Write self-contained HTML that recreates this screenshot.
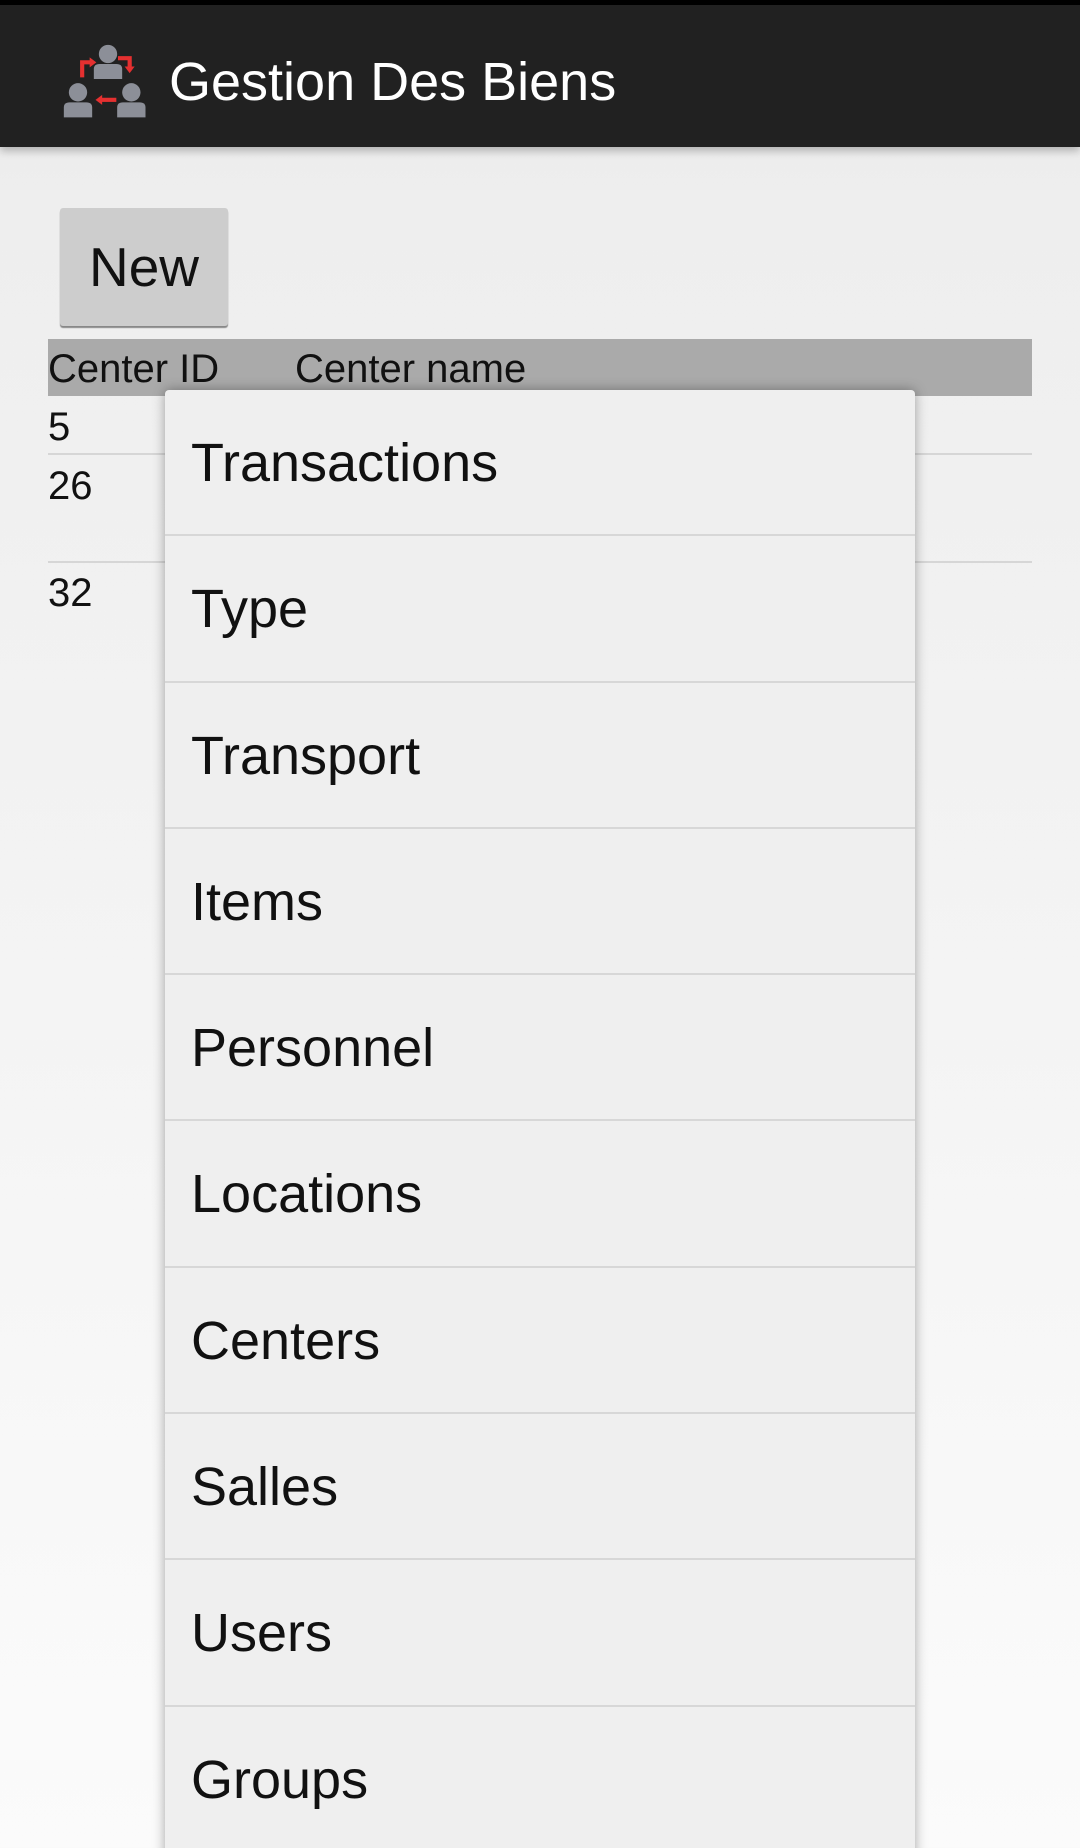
<!DOCTYPE html>
<html><head><meta charset="utf-8"><style>
*{margin:0;padding:0;box-sizing:border-box}
html,body{width:1080px;height:1848px;overflow:hidden}
body{font-family:"Liberation Sans",sans-serif;background:linear-gradient(#e9e9e9 0,#eeeeee 200px,#f4f4f4 1000px,#fbfbfb 1848px);position:relative}
.sb{position:absolute;left:0;top:0;width:1080px;height:5px;background:#000}
.ab{position:absolute;left:0;top:5px;width:1080px;height:142px;background:#212121;box-shadow:0 4px 8px rgba(0,0,0,.25)}
.title{position:absolute;left:169px;top:42px;color:#fff;font-size:54px;line-height:70px}
.icon{position:absolute;left:58px;top:28px}
.btn{position:absolute;left:60px;top:208px;width:168px;height:118px;background:#cdcdcd;border-radius:3px;box-shadow:0 2px 1px #888;font-size:55px;text-align:center;line-height:118px;color:#111}
.hdr{position:absolute;left:48px;top:339px;width:984px;height:57px;background:#aaaaaa}
.t{position:absolute;font-size:40px;color:#111;line-height:48px}
.ln{position:absolute;left:48px;width:984px;height:2px;background:#d6d6d6}
.menu{position:absolute;left:165px;top:390px;width:750px;height:1500px;background:#efefef;border-radius:4px 4px 0 0;box-shadow:0 0 12px rgba(0,0,0,.35)}
.it{height:146.3px;border-bottom:2px solid #d7d7d7;font-size:54px;color:#111;padding-left:26px;line-height:146px}
</style></head><body>
<div class="sb"></div>
<div class="ab">
<svg class="icon" width="100" height="92" viewBox="0 0 120 110">
<g fill="#8c8f98">
<circle cx="60" cy="25" r="11"/><path d="M43 55 V43 Q43 37 50 37 H70 Q77 37 77 43 V55 Z"/>
<circle cx="24" cy="71" r="11"/><path d="M7 101 V89 Q7 83 14 83 H34 Q41 83 41 89 V101 Z"/>
<circle cx="88" cy="71" r="11"/><path d="M71 101 V89 Q71 83 78 83 H98 Q105 83 105 89 V101 Z"/>
</g>
<g fill="none" stroke="#e53030" stroke-width="5">
<path d="M29 53 V35 H39"/><path d="M72 30 H86 V42"/><path d="M70 80 H52"/>
</g>
<g fill="#e53030"><path d="M38 29 L46 35 L38 41Z"/><path d="M80 40 L92 40 L86 48Z"/><path d="M53 74 L45 80 L53 86Z"/></g>
</svg>
<div class="title">Gestion Des Biens</div>
</div>
<div class="btn">New</div>
<div class="hdr"></div>
<div class="t" style="left:48px;top:345px">Center ID</div>
<div class="t" style="left:295px;top:345px">Center name</div>
<div class="t" style="left:48px;top:403px">5</div>
<div class="ln" style="top:453px"></div>
<div class="t" style="left:48px;top:462px">26</div>
<div class="ln" style="top:561px"></div>
<div class="t" style="left:48px;top:569px">32</div>
<div class="menu">
<div class="it">Transactions</div>
<div class="it">Type</div>
<div class="it">Transport</div>
<div class="it">Items</div>
<div class="it">Personnel</div>
<div class="it">Locations</div>
<div class="it">Centers</div>
<div class="it">Salles</div>
<div class="it">Users</div>
<div class="it">Groups</div>
</div>
</body></html>
